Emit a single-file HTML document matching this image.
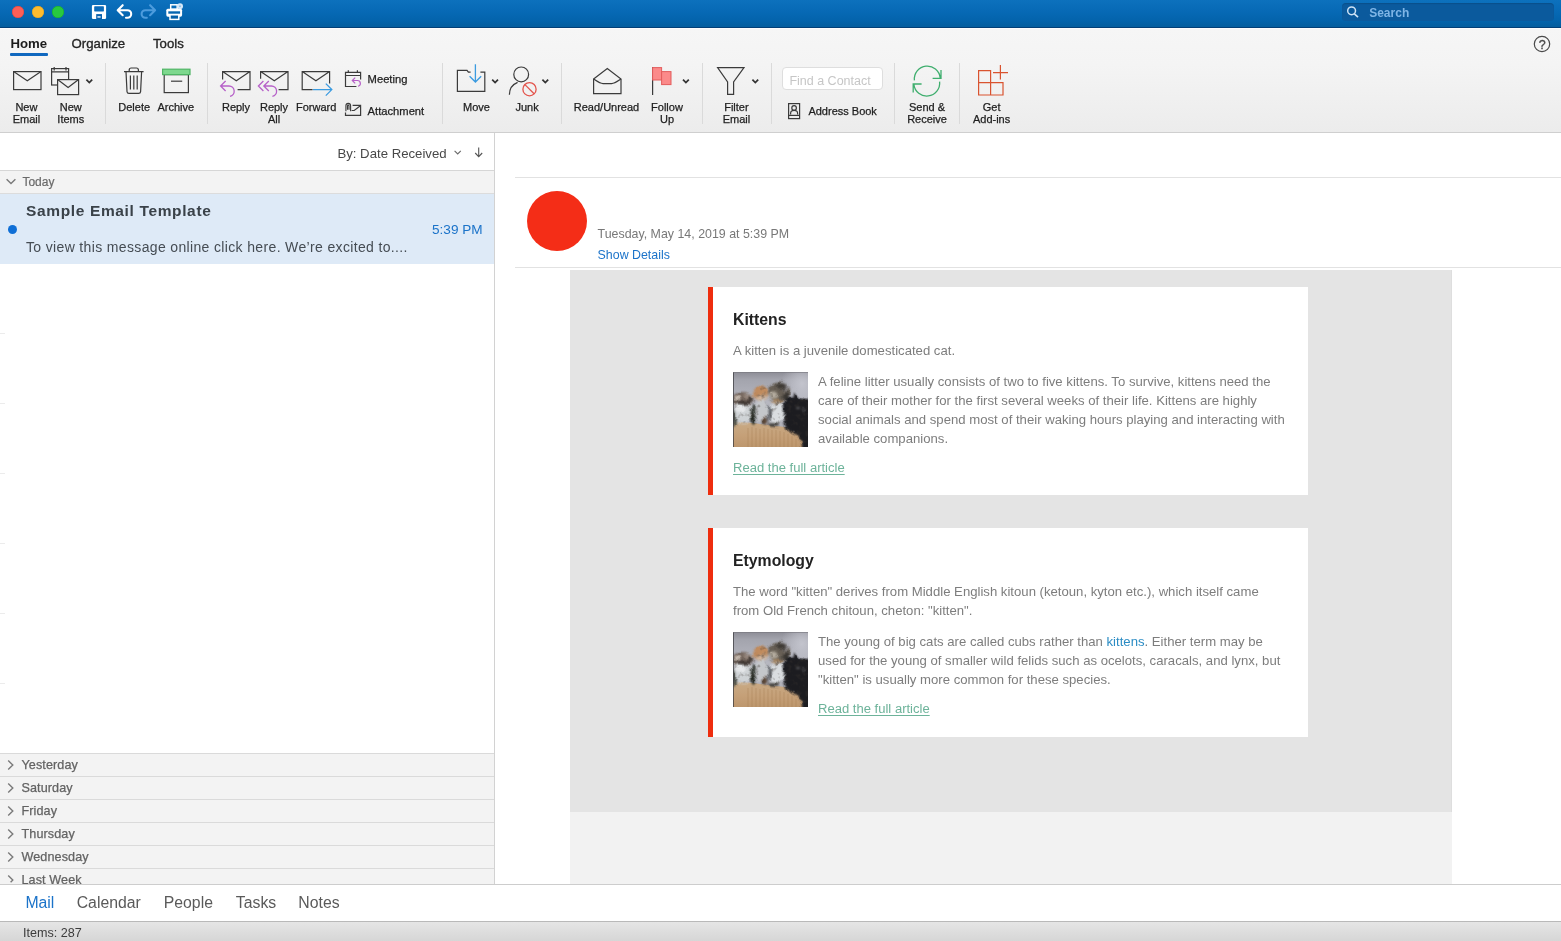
<!DOCTYPE html>
<html lang="en"><head><meta charset="utf-8"><title>Outlook</title>
<style>
html,body{margin:0;padding:0;background:#fff;}
body{width:1561px;height:941px;overflow:hidden;position:relative;font-family:"Liberation Sans", sans-serif;}
.t{position:absolute;white-space:nowrap;line-height:1;}
.r{position:absolute;box-sizing:border-box;}
svg{position:absolute;left:0;top:0;overflow:visible;}
#app{position:absolute;left:0;top:0;width:1561px;height:941px;will-change:transform;}
</style></head><body>
<div id="app">
<!-- title bar -->
<div class="r" style="left:0px;top:0px;width:1561px;height:28px;background:linear-gradient(#0d71bd,#0769b5 42%,#0363ab 75%,#045e9f 94%,#045e9f 96%);"></div>
<div class="r" style="left:0px;top:27px;width:1561px;height:1px;background:#023f77;"></div>
<div class="r" style="left:12px;top:6px;width:12px;height:12px;background:#fc5f57;border-radius:50%;box-shadow:inset 0 0 0 0.5px #e0443e;"></div>
<div class="r" style="left:32px;top:6px;width:12px;height:12px;background:#fdbc2e;border-radius:50%;box-shadow:inset 0 0 0 0.5px #dea123;"></div>
<div class="r" style="left:52px;top:6px;width:12px;height:12px;background:#28c840;border-radius:50%;box-shadow:inset 0 0 0 0.5px #1aab29;"></div>
<div class="r" style="left:1342px;top:3px;width:212px;height:18px;background:#0b5a9d;border-radius:4px;box-shadow:inset 0 1px 1px rgba(0,0,0,.12);"></div>
<div class="t" style="left:1369.20px;top:7.00px;font-size:12px;color:#7fb5e6;font-weight:bold;">Search</div>
<!-- ribbon -->
<div class="r" style="left:0px;top:28px;width:1561px;height:104px;background:linear-gradient(#f6f6f6,#f4f4f4 35%,#ececec);"></div>
<div class="r" style="left:0px;top:28px;width:1561px;height:1px;background:#fcfcfc;"></div>
<div class="r" style="left:0px;top:132px;width:1561px;height:1px;background:#cfcfcf;"></div>
<div class="t" style="left:10.40px;top:36.50px;font-size:13.2px;color:#1b1b1b;font-weight:bold;letter-spacing:0.05px;">Home</div>
<div class="r" style="left:10px;top:53px;width:38px;height:3px;background:#1068bf;border-radius:1px;"></div>
<div class="t" style="left:71.60px;top:36.50px;font-size:13.2px;color:#262626;-webkit-text-stroke:0.35px #262626;">Organize</div>
<div class="t" style="left:153.00px;top:36.50px;font-size:13.2px;color:#262626;-webkit-text-stroke:0.35px #262626;">Tools</div>
<div class="t" style="left:1392.20px;width:300px;text-align:center;top:38.95px;font-size:12.5px;color:#484848;-webkit-text-stroke:0.3px #484848;">?</div>
<div class="r" style="left:105px;top:63px;width:1px;height:61px;background:#dadada;"></div>
<div class="r" style="left:207px;top:63px;width:1px;height:61px;background:#dadada;"></div>
<div class="r" style="left:442px;top:63px;width:1px;height:61px;background:#dadada;"></div>
<div class="r" style="left:561px;top:63px;width:1px;height:61px;background:#dadada;"></div>
<div class="r" style="left:702px;top:63px;width:1px;height:61px;background:#dadada;"></div>
<div class="r" style="left:771px;top:63px;width:1px;height:61px;background:#dadada;"></div>
<div class="r" style="left:894px;top:63px;width:1px;height:61px;background:#dadada;"></div>
<div class="r" style="left:959px;top:63px;width:1px;height:61px;background:#dadada;"></div>
<div class="t" style="left:-123.60px;width:300px;text-align:center;top:101.70px;font-size:11px;color:#1e1e1e;-webkit-text-stroke:0.25px #1e1e1e;">New</div>
<div class="t" style="left:-123.60px;width:300px;text-align:center;top:113.70px;font-size:11px;color:#1e1e1e;-webkit-text-stroke:0.25px #1e1e1e;">Email</div>
<div class="t" style="left:-79.20px;width:300px;text-align:center;top:101.70px;font-size:11px;color:#1e1e1e;-webkit-text-stroke:0.25px #1e1e1e;">New</div>
<div class="t" style="left:-79.20px;width:300px;text-align:center;top:113.70px;font-size:11px;color:#1e1e1e;-webkit-text-stroke:0.25px #1e1e1e;">Items</div>
<div class="t" style="left:-15.80px;width:300px;text-align:center;top:101.70px;font-size:11px;color:#1e1e1e;-webkit-text-stroke:0.25px #1e1e1e;">Delete</div>
<div class="t" style="left:25.80px;width:300px;text-align:center;top:101.70px;font-size:11px;color:#1e1e1e;-webkit-text-stroke:0.25px #1e1e1e;">Archive</div>
<div class="t" style="left:86.00px;width:300px;text-align:center;top:101.70px;font-size:11px;color:#1e1e1e;-webkit-text-stroke:0.25px #1e1e1e;">Reply</div>
<div class="t" style="left:124.00px;width:300px;text-align:center;top:101.70px;font-size:11px;color:#1e1e1e;-webkit-text-stroke:0.25px #1e1e1e;">Reply</div>
<div class="t" style="left:124.00px;width:300px;text-align:center;top:113.70px;font-size:11px;color:#1e1e1e;-webkit-text-stroke:0.25px #1e1e1e;">All</div>
<div class="t" style="left:166.20px;width:300px;text-align:center;top:101.70px;font-size:11px;color:#1e1e1e;-webkit-text-stroke:0.25px #1e1e1e;">Forward</div>
<div class="t" style="left:367.60px;top:73.80px;font-size:11.2px;color:#1e1e1e;-webkit-text-stroke:0.25px #1e1e1e;">Meeting</div>
<div class="t" style="left:367.60px;top:105.60px;font-size:11.2px;color:#1e1e1e;-webkit-text-stroke:0.25px #1e1e1e;">Attachment</div>
<div class="t" style="left:326.50px;width:300px;text-align:center;top:101.70px;font-size:11px;color:#1e1e1e;-webkit-text-stroke:0.25px #1e1e1e;">Move</div>
<div class="t" style="left:377.10px;width:300px;text-align:center;top:101.70px;font-size:11px;color:#1e1e1e;-webkit-text-stroke:0.25px #1e1e1e;">Junk</div>
<div class="t" style="left:456.50px;width:300px;text-align:center;top:101.70px;font-size:11px;color:#1e1e1e;-webkit-text-stroke:0.25px #1e1e1e;">Read/Unread</div>
<div class="t" style="left:517.00px;width:300px;text-align:center;top:101.70px;font-size:11px;color:#1e1e1e;-webkit-text-stroke:0.25px #1e1e1e;">Follow</div>
<div class="t" style="left:517.00px;width:300px;text-align:center;top:113.70px;font-size:11px;color:#1e1e1e;-webkit-text-stroke:0.25px #1e1e1e;">Up</div>
<div class="t" style="left:586.40px;width:300px;text-align:center;top:101.70px;font-size:11px;color:#1e1e1e;-webkit-text-stroke:0.25px #1e1e1e;">Filter</div>
<div class="t" style="left:586.40px;width:300px;text-align:center;top:113.70px;font-size:11px;color:#1e1e1e;-webkit-text-stroke:0.25px #1e1e1e;">Email</div>
<div class="r" style="left:782px;top:67px;width:99px;height:21px;background:#fff;border:1px solid #dedede;border-radius:4px;box-sizing:content-box;"></div>
<div class="t" style="left:789.40px;top:74.75px;font-size:12.5px;color:#c6c6c6;">Find a Contact</div>
<div class="t" style="left:808.40px;top:105.70px;font-size:11px;color:#1e1e1e;-webkit-text-stroke:0.25px #1e1e1e;">Address Book</div>
<div class="t" style="left:777.00px;width:300px;text-align:center;top:101.70px;font-size:11px;color:#1e1e1e;-webkit-text-stroke:0.25px #1e1e1e;">Send &amp;</div>
<div class="t" style="left:777.00px;width:300px;text-align:center;top:113.70px;font-size:11px;color:#1e1e1e;-webkit-text-stroke:0.25px #1e1e1e;">Receive</div>
<div class="t" style="left:841.60px;width:300px;text-align:center;top:101.70px;font-size:11px;color:#1e1e1e;-webkit-text-stroke:0.25px #1e1e1e;">Get</div>
<div class="t" style="left:841.60px;width:300px;text-align:center;top:113.70px;font-size:11px;color:#1e1e1e;-webkit-text-stroke:0.25px #1e1e1e;">Add-ins</div>
<!-- message list -->
<div class="r" style="left:0px;top:133px;width:494px;height:751px;background:#fff;"></div>
<div class="r" style="left:494px;top:133px;width:1px;height:751px;background:#d2d2d2;"></div>
<div class="t" style="left:337.40px;top:146.50px;font-size:13.2px;color:#484848;">By: Date Received</div>
<div class="r" style="left:0px;top:170px;width:494px;height:1px;background:#d6d6d6;"></div>
<div class="r" style="left:0px;top:171px;width:494px;height:22px;background:#f3f3f3;"></div>
<div class="r" style="left:0px;top:193px;width:494px;height:1px;background:#dcdcdc;"></div>
<div class="t" style="left:22.40px;top:176.00px;font-size:12px;color:#6a6a6a;-webkit-text-stroke:0.2px #6a6a6a;">Today</div>
<div class="r" style="left:0px;top:194px;width:494px;height:70px;background:#deeaf7;"></div>
<div class="t" style="left:26.00px;top:202.75px;font-size:15.5px;color:#3a4249;font-weight:bold;letter-spacing:0.64px;">Sample Email Template</div>
<div class="r" style="left:8px;top:225px;width:9px;height:9px;background:#0f6fd6;border-radius:50%;"></div>
<div class="t" style="left:26.00px;top:240.00px;font-size:14px;color:#454c53;letter-spacing:0.35px;">To view this message online click here. We’re excited to....</div>
<div class="t" style="left:432.00px;top:222.70px;font-size:13.6px;color:#1b73c9;">5:39 PM</div>
<div class="r" style="left:0px;top:333px;width:5px;height:1px;background:#ececec;"></div>
<div class="r" style="left:0px;top:403px;width:5px;height:1px;background:#ececec;"></div>
<div class="r" style="left:0px;top:473px;width:5px;height:1px;background:#ececec;"></div>
<div class="r" style="left:0px;top:543px;width:5px;height:1px;background:#ececec;"></div>
<div class="r" style="left:0px;top:613px;width:5px;height:1px;background:#ececec;"></div>
<div class="r" style="left:0px;top:683px;width:5px;height:1px;background:#ececec;"></div>
<div class="r" style="left:0px;top:753px;width:494px;height:1px;background:#dadada;"></div>
<div class="r" style="left:0px;top:754px;width:494px;height:22px;background:#f3f3f3;"></div>
<div class="t" style="left:21.50px;top:758.70px;font-size:12.6px;color:#636363;letter-spacing:0.1px;-webkit-text-stroke:0.25px #636363;">Yesterday</div>
<div class="r" style="left:0px;top:776px;width:494px;height:1px;background:#dadada;"></div>
<div class="r" style="left:0px;top:777px;width:494px;height:22px;background:#f3f3f3;"></div>
<div class="t" style="left:21.50px;top:781.70px;font-size:12.6px;color:#636363;letter-spacing:0.1px;-webkit-text-stroke:0.25px #636363;">Saturday</div>
<div class="r" style="left:0px;top:799px;width:494px;height:1px;background:#dadada;"></div>
<div class="r" style="left:0px;top:800px;width:494px;height:22px;background:#f3f3f3;"></div>
<div class="t" style="left:21.50px;top:804.70px;font-size:12.6px;color:#636363;letter-spacing:0.1px;-webkit-text-stroke:0.25px #636363;">Friday</div>
<div class="r" style="left:0px;top:822px;width:494px;height:1px;background:#dadada;"></div>
<div class="r" style="left:0px;top:823px;width:494px;height:22px;background:#f3f3f3;"></div>
<div class="t" style="left:21.50px;top:827.70px;font-size:12.6px;color:#636363;letter-spacing:0.1px;-webkit-text-stroke:0.25px #636363;">Thursday</div>
<div class="r" style="left:0px;top:845px;width:494px;height:1px;background:#dadada;"></div>
<div class="r" style="left:0px;top:846px;width:494px;height:22px;background:#f3f3f3;"></div>
<div class="t" style="left:21.50px;top:850.70px;font-size:12.6px;color:#636363;letter-spacing:0.1px;-webkit-text-stroke:0.25px #636363;">Wednesday</div>
<div class="r" style="left:0px;top:868px;width:494px;height:1px;background:#dadada;"></div>
<div class="r" style="left:0px;top:869px;width:494px;height:22px;background:#f3f3f3;"></div>
<div class="t" style="left:21.50px;top:873.70px;font-size:12.6px;color:#636363;letter-spacing:0.1px;-webkit-text-stroke:0.25px #636363;">Last Week</div>
<!-- reading pane -->
<div class="r" style="left:495px;top:133px;width:1066px;height:751px;background:#fff;"></div>
<div class="r" style="left:515px;top:177px;width:1046px;height:1px;background:#e2e2e2;"></div>
<div class="r" style="left:515px;top:267px;width:1046px;height:1px;background:#e2e2e2;"></div>
<div class="r" style="left:527px;top:191px;width:60px;height:60px;background:#f42d17;border-radius:50%;"></div>
<div class="t" style="left:597.60px;top:227.80px;font-size:12.4px;color:#787878;">Tuesday, May 14, 2019 at 5:39 PM</div>
<div class="t" style="left:597.60px;top:248.80px;font-size:12.4px;color:#1b73c9;">Show Details</div>
<div class="r" style="left:570px;top:270px;width:882px;height:542px;background:#e4e4e4;"></div>
<div class="r" style="left:570px;top:812px;width:882px;height:72px;background:#f2f2f2;"></div>
<div class="r" style="left:1451px;top:270px;width:1px;height:542px;background:#dedede;"></div>
<div class="r" style="left:708px;top:287px;width:600px;height:208px;background:#fff;"></div>
<div class="r" style="left:708px;top:287px;width:5px;height:208px;background:#ee2d0e;"></div>
<div class="r" style="left:708px;top:528px;width:600px;height:209px;background:#fff;"></div>
<div class="r" style="left:708px;top:528px;width:5px;height:209px;background:#ee2d0e;"></div>
<div class="t" style="left:733.00px;top:311.60px;font-size:15.8px;color:#222;font-weight:bold;">Kittens</div>
<div class="t" style="left:733.00px;top:343.93px;font-size:13.15px;color:#7d7d7d;">A kitten is a juvenile domesticated cat.</div>
<div class="t" style="left:818.00px;top:374.93px;font-size:13.15px;color:#7d7d7d;">A feline litter usually consists of two to five kittens. To survive, kittens need the</div>
<div class="t" style="left:818.00px;top:393.93px;font-size:13.15px;color:#7d7d7d;">care of their mother for the first several weeks of their life. Kittens are highly</div>
<div class="t" style="left:818.00px;top:412.93px;font-size:13.15px;color:#7d7d7d;">social animals and spend most of their waking hours playing and interacting with</div>
<div class="t" style="left:818.00px;top:431.93px;font-size:13.15px;color:#7d7d7d;">available companions.</div>
<div class="t" style="left:733.00px;top:460.98px;font-size:13.05px;color:#6db39a;text-decoration:underline;text-underline-offset:1.5px;text-decoration-thickness:1px;">Read the full article</div>
<div class="t" style="left:733.00px;top:552.60px;font-size:15.8px;color:#222;font-weight:bold;">Etymology</div>
<div class="t" style="left:733.00px;top:584.92px;font-size:13.15px;color:#7d7d7d;">The word "kitten" derives from Middle English kitoun (ketoun, kyton etc.), which itself came</div>
<div class="t" style="left:733.00px;top:603.92px;font-size:13.15px;color:#7d7d7d;">from Old French chitoun, cheton: "kitten".</div>
<div class="t" style="left:818.00px;top:634.92px;font-size:13.15px;color:#7d7d7d;">The young of big cats are called cubs rather than <span style="color:#2b8cc4">kittens</span>. Either term may be</div>
<div class="t" style="left:818.00px;top:653.92px;font-size:13.15px;color:#7d7d7d;">used for the young of smaller wild felids such as ocelots, caracals, and lynx, but</div>
<div class="t" style="left:818.00px;top:672.92px;font-size:13.15px;color:#7d7d7d;">"kitten" is usually more common for these species.</div>
<div class="t" style="left:818.00px;top:701.98px;font-size:13.05px;color:#6db39a;text-decoration:underline;text-underline-offset:1.5px;text-decoration-thickness:1px;">Read the full article</div>
<svg width="0" height="0" style="position:absolute">
<defs>
 <linearGradient id="kbg" x1="0" y1="0" x2="0" y2="1"><stop offset="0" stop-color="#8d8d96"/><stop offset=".1" stop-color="#a3a4ad"/><stop offset=".4" stop-color="#b6b7c0"/><stop offset="1" stop-color="#adadb5"/></linearGradient>
 <radialGradient id="klt" cx=".8" cy=".35" r=".7"><stop offset="0" stop-color="#c3c4cd"/><stop offset="1" stop-color="#c3c4cd" stop-opacity="0"/></radialGradient>
 <linearGradient id="kbk" x1="0" y1="0" x2="0" y2="1"><stop offset="0" stop-color="#c9ab86"/><stop offset=".5" stop-color="#c5a078"/><stop offset="1" stop-color="#bb946a"/></linearGradient>
 <filter id="kfur" x="0" y="0" width="100%" height="100%" color-interpolation-filters="sRGB">
  <feGaussianBlur in="SourceGraphic" stdDeviation="1.0" result="b"/>
  <feTurbulence type="fractalNoise" baseFrequency="0.11" numOctaves="2" seed="7" result="n"/>
  <feDisplacementMap in="b" in2="n" scale="6" xChannelSelector="R" yChannelSelector="G" result="d"/>
  <feTurbulence type="fractalNoise" baseFrequency="0.22" numOctaves="2" seed="3" result="n2"/>
  <feColorMatrix in="n2" type="matrix" values="0 0 0 0 0  0 0 0 0 0  0 0 0 0 0  1.2 0 0 0 -0.64" result="na"/>
  <feFlood flood-color="#3a342e" result="dk"/>
  <feComposite in="dk" in2="na" operator="in" result="spk"/>
  <feComposite in="spk" in2="d" operator="atop" result="m"/>
  <feGaussianBlur in="m" stdDeviation="0.65"/>
 </filter>
 <filter id="kbl2" x="-10%" y="-10%" width="120%" height="120%"><feGaussianBlur stdDeviation="0.6"/></filter>
 <clipPath id="kcl"><rect x="0" y="0" width="75" height="75"/></clipPath>
 <g id="kit" clip-path="url(#kcl)">
  <rect width="75" height="75" fill="url(#kbg)"/>
  <rect x="45" y="0" width="30" height="34" fill="url(#klt)"/>
  <!-- basket (not displaced) -->
  <g filter="url(#kbl2)">
   <path d="M-3 49 L20 51 L52 55 L70 64 L70 78 L-3 78 Z" fill="url(#kbk)"/>
   <g stroke="#a07a4e" stroke-width=".7" opacity=".5">
    <path d="M15 56V75M19 55V75M23 56V75M27 57V75M31 56V75M35 57V75M39 58V75M43 58V75M47 59V75M51 60V75M55 62V75M59 64V75M63 67V75"/>
   </g>
  </g>
  <g filter="url(#kfur)">
   <rect x="-5" y="-5" width="85" height="85" fill="#000" opacity="0"/>
   <!-- kitten 1 -->
   <ellipse cx="9" cy="27.5" rx="11.5" ry="7.5" fill="#75665d"/>
   <ellipse cx="4" cy="26.5" rx="3.2" ry="3" fill="#c4b8ad"/>
   <ellipse cx="14" cy="23.5" rx="4.5" ry="2.4" fill="#95857b"/>
   <ellipse cx="10" cy="41.5" rx="10" ry="10.5" fill="#cfd3d6"/>
   <ellipse cx="8" cy="36" rx="5" ry="3" fill="#e6e8ea"/>
   <ellipse cx="20.5" cy="43" rx="2.8" ry="10" fill="#1f251d"/>
   <ellipse cx="1" cy="45" rx="2" ry="9" fill="#43463f"/>
   <!-- kitten 2 orange -->
   <ellipse cx="27.5" cy="21.5" rx="7.5" ry="7.2" fill="#c08b5e"/>
   <ellipse cx="28" cy="25.5" rx="5" ry="3.2" fill="#d3b59b"/>
   <ellipse cx="28.5" cy="38.5" rx="7.5" ry="10.5" fill="#c4c7cb"/>
   <ellipse cx="32" cy="49.5" rx="3" ry="4.2" fill="#5a4636"/>
   <!-- kitten 3 tabby -->
   <ellipse cx="46" cy="20" rx="11" ry="9.5" fill="#675f55"/>
   <ellipse cx="41" cy="23" rx="4.6" ry="3.6" fill="#b3ab9e"/>
   <ellipse cx="52.5" cy="15" rx="3.4" ry="3.2" fill="#8a8789"/>
   <ellipse cx="45" cy="29" rx="5.5" ry="1.8" fill="#b08a5f"/>
   <ellipse cx="44" cy="40.5" rx="8.6" ry="10.8" fill="#dadde0"/>
   <ellipse cx="36.2" cy="41" rx="1.4" ry="8.5" fill="#474b52"/>
   <ellipse cx="41" cy="52" rx="5" ry="2" fill="#45433f"/>
   <ellipse cx="11" cy="30.5" rx="7" ry="2.2" fill="#3f3632"/>
   <ellipse cx="17" cy="27" rx="2.5" ry="3.5" fill="#4a403b"/>
   <ellipse cx="48" cy="14" rx="5" ry="2.6" fill="#3e3a35"/>
   <ellipse cx="53" cy="24" rx="3" ry="5" fill="#3a3733"/>
   <ellipse cx="44" cy="31.5" rx="1.6" ry="1.4" fill="#4b4038"/>
   <ellipse cx="25" cy="23.5" rx="1.1" ry="1" fill="#5a3f2a"/>
   <ellipse cx="30.5" cy="23.5" rx="1.1" ry="1" fill="#5a3f2a"/>
   <ellipse cx="54.5" cy="42" rx="3.5" ry="10" fill="#26262a"/>
   <!-- kitten 4 black -->
   <path d="M50.5 33 C52.5 25.5 56.5 24 60 26 L62 19.5 L66.5 26 L75 27 L80 27 L80 80 L68.5 80 L67 64 L58 60.5 C52.5 57.5 49.5 50 51.5 42 Z" fill="#1c1c20"/>
   <ellipse cx="65" cy="36" rx="2.1" ry="1.1" fill="#606062"/>
   <ellipse cx="70.5" cy="37.5" rx="1.7" ry="1" fill="#58595d"/>
  </g>
  <rect x="0" y="0" width="1" height="75" fill="#3c3c40" opacity=".75"/>
  <rect x="0" y="0" width="75" height="1" fill="#77777d" opacity=".6"/>
 </g>
</defs></svg>
<svg width="75" height="75" viewBox="0 0 75 75" style="left:733px;top:372px"><use href="#kit"/></svg>
<svg width="75" height="75" viewBox="0 0 75 75" style="left:733px;top:632px"><use href="#kit"/></svg>

<!-- nav + status -->
<div class="r" style="left:0px;top:884px;width:1561px;height:37px;background:#fff;"></div>
<div class="r" style="left:0px;top:884px;width:1561px;height:1px;background:#cdcdcd;"></div>
<div class="t" style="left:25.40px;top:894.60px;font-size:15.8px;color:#1b73c9;">Mail</div>
<div class="t" style="left:76.70px;top:894.60px;font-size:15.8px;color:#5a5a5a;">Calendar</div>
<div class="t" style="left:163.75px;top:894.60px;font-size:15.8px;color:#5a5a5a;">People</div>
<div class="t" style="left:235.80px;top:894.60px;font-size:15.8px;color:#5a5a5a;">Tasks</div>
<div class="t" style="left:298.30px;top:894.60px;font-size:15.8px;color:#5a5a5a;">Notes</div>
<div class="r" style="left:0px;top:921px;width:1561px;height:20px;background:linear-gradient(#e6e6e6,#d6d6d6);"></div>
<div class="r" style="left:0px;top:921px;width:1561px;height:1px;background:#b9b9b9;"></div>
<div class="t" style="left:22.90px;top:926.70px;font-size:12.6px;color:#3c3c3c;">Items: 287</div>
<svg width="1561" height="941" viewBox="0 0 1561 941" fill="none" stroke-linecap="butt" stroke-linejoin="miter">
<!-- title bar icons -->
<g>
 <!-- save -->
 <rect x="91.9" y="4.9" width="14.2" height="14.1" rx="1.2" fill="#fff"/>
 <rect x="94.2" y="6.3" width="9.7" height="5.1" rx=".6" fill="#0c6bb9"/>
 <rect x="96.2" y="14.1" width="5.8" height="4.9" fill="#0a62ad"/>
 <rect x="97.4" y="16.2" width="3.2" height="1.5" fill="#e8f2fb"/>
 <!-- undo -->
 <path d="M122.7 5.2 L117.7 10.2 L122.7 15.2 M118 10.2 H127.4 A3.8 3.8 0 0 1 127.4 17.8 H126" stroke="#fff" stroke-width="2.1" stroke-linecap="round" stroke-linejoin="round"/>
 <!-- redo (dim) -->
 <path d="M150.1 5.2 L155.1 10.2 L150.1 15.2 M154.8 10.2 H145.4 A3.8 3.8 0 0 0 145.4 17.8 H146.8" stroke="#4d9cdd" stroke-width="2.1" stroke-linecap="round" stroke-linejoin="round"/>
 <!-- print -->
 <rect x="170.7" y="4.8" width="6.5" height="4.4" stroke="#fff" stroke-width="1.5"/>
 <rect x="166.3" y="8.7" width="15.8" height="8" rx="1.6" fill="#fff"/>
 <rect x="168.3" y="11.3" width="11.8" height="2.4" fill="#0666b0"/>
 <rect x="170" y="14.8" width="8.8" height="4.6" fill="#0660a8" stroke="#fff" stroke-width="1.5"/>
 <circle cx="180" cy="6.2" r="3" fill="#d6e8f8"/>
 <circle cx="180" cy="6.2" r="1" fill="#8dbde6"/>
 <!-- search magnifier -->
 <circle cx="1351.6" cy="10.8" r="3.9" stroke="#cfe3f6" stroke-width="1.5"/>
 <path d="M1354.4 13.8 L1358 17.2" stroke="#cfe3f6" stroke-width="1.6"/>
</g>
<!-- help -->
<circle cx="1542" cy="44" r="7.7" stroke="#4a4a4a" stroke-width="1.2"/>

<g stroke="#3b3b3b" stroke-width="1.2">
 <!-- New Email -->
 <rect x="13.6" y="71.6" width="27.4" height="18"/>
 <path d="M13.6 71.6 L27.3 80.8 L41 71.6"/>
 <!-- New Items -->
 <rect x="51.6" y="68.6" width="17" height="16.4"/>
 <path d="M51.6 71.8 H68.6 M54.2 67 V70.4 M66 67 V70.4" />
 <rect x="57.6" y="79.6" width="21" height="15" fill="#f1f1f1"/>
 <path d="M57.6 79.6 L68.1 87.4 L78.6 79.6"/>
 <!-- Delete -->
 <path d="M124 71.6 H143.6 M129.2 71.6 V70 a2 2 0 0 1 2 -2 H136.4 a2 2 0 0 1 2 2 V71.6"/>
 <path d="M126 71.6 L127 91.6 a2 2 0 0 0 2 1.8 H138.6 a2 2 0 0 0 2 -1.8 L141.6 71.6"/>
 <path d="M130.4 75.4 V89.6 M133.8 75.4 V89.6 M137.2 75.4 V89.6"/>
 <!-- Archive -->
 <rect x="164.2" y="74.6" width="24.2" height="18"/>
 <path d="M171 81.2 H182.2"/>
 <rect x="162.6" y="69.2" width="27.4" height="5.4" fill="#7ed88e" stroke="#4fb565"/>
 <!-- Reply -->
 <path d="M222.6 79.6 V71.6 H250 V89.6 H237.6 M222.6 71.6 L236.3 80.8 L250 71.6"/>
 <!-- Reply All -->
 <path d="M260.6 78.8 V71.6 H288 V89.6 H278.6 M260.6 71.6 L274.3 80.8 L288 71.6"/>
 <!-- Forward -->
 <path d="M312.6 89.6 H302.2 V71.6 H329.6 V83.6 M302.2 71.6 L315.9 80.8 L329.6 71.6"/>
 <!-- Meeting -->
 <path d="M356.4 86.5 H345.5 V72.3 H360.6 V79.4 M345.5 75.5 H360.6 M348.3 70.2 V72.6 M357.4 70.2 V72.6"/>
 <!-- Attachment -->
 <path d="M352.6 105.4 H360.6 V115.3 H345.5 V112.4 M360.4 105.8 L354.2 110.5 H351.6"/>
 <path d="M345.9 111.3 V105.7 a2.35 2.35 0 0 1 4.7 0 V111.3 M347.5 109.8 V105.9 a0.75 0.75 0 0 1 1.5 0 V109.8" stroke-width="1.1"/>
 <!-- Move folder -->
 <path d="M470.6 72.2 H468.4 L467 70.4 H457.4 V91.4 H484.8 V72.2 H480.4"/>
 <!-- Junk person -->
 <circle cx="521.2" cy="74.4" r="7.4"/>
 <path d="M509.4 94.8 C509.4 88.6 512.6 84.4 517.6 82.4"/>
 <!-- Read/Unread -->
 <path d="M593.6 79 L607.3 68.6 L621 79 V93.6 H593.6 Z"/>
 <path d="M593.6 79 C598 82 600 83.6 603 83.6 H611.6 C614.6 83.6 616.6 82 621 79"/>
 <!-- Follow up pole -->
 <path d="M652.6 67 V95"/>
 <!-- Filter -->
 <path d="M717.6 67.6 H744 L733.6 82 V94.4 H727.6 V82 Z"/>
 <!-- Address book -->
 <rect x="788.6" y="103.6" width="11" height="15"/>
 <path d="M788.6 115.4 H799.6"/>
 <circle cx="794.1" cy="108" r="2.3"/>
 <path d="M790.6 114.6 V113.4 a3.5 3 0 0 1 7 0 V114.6"/>
</g>
<!-- chevrons -->
<g stroke="#333" stroke-width="1.7">
 <path d="M86.4 79.6 L89.3 82.6 L92.2 79.6"/>
 <path d="M492.2 79.6 L495.1 82.6 L498 79.6"/>
 <path d="M542.4 79.6 L545.3 82.6 L548.2 79.6"/>
 <path d="M683 79.6 L685.9 82.6 L688.8 79.6"/>
 <path d="M752.4 79.6 L755.3 82.6 L758.2 79.6"/>
</g>
<!-- purple reply arrows -->
<g stroke="#b660c8" stroke-width="1.3">
 <path d="M225.6 81 L220.6 86 L225.6 91 M221 86 H229 a5.2 5.2 0 0 1 1 10.3"/>
 <path d="M263.4 81 L258.4 86 L263.4 91 M268.8 81 L263.8 86 L268.8 91 M264.2 86 H271.4 a5.2 5.2 0 0 1 1 10.3"/>
 <path d="M355.2 77.6 L352.3 80.5 L355.2 83.4 M352.7 80.5 H357.4 a2.9 2.9 0 0 1 .6 5.75" stroke-width="1.2"/>
</g>
<!-- blue arrows -->
<g stroke="#3b9be0" stroke-width="1.3">
 <path d="M313 89.6 H331.4 M325.8 83.6 L331.8 89.6 L325.8 95.6"/>
 <path d="M475.4 64.2 V82 M469.6 76.2 L475.4 82 L481.2 76.2"/>
</g>
<!-- junk no-sign -->
<circle cx="529.5" cy="89.2" r="6.6" fill="#f1f1f1" stroke="#e3544c" stroke-width="1.3"/>
<path d="M524.9 84.6 L534.1 93.8" stroke="#e3544c" stroke-width="1.3"/>
<!-- flags -->
<rect x="652.6" y="67.6" width="9" height="12.4" fill="#fb8a8a" stroke="#e35d5d" stroke-width="1"/>
<rect x="661.6" y="71.6" width="9.4" height="13" fill="#fb8a8a" stroke="#e35d5d" stroke-width="1"/>
<!-- send/receive -->
<g stroke="#3fae6e" stroke-width="1.3">
 <path d="M914.4 80.4 A12.6 12.6 0 0 1 940.2 77.6 M941 70 V78.4 H932.6"/>
 <path d="M939.6 81.6 A12.6 12.6 0 0 1 913.9 84.6 M913.2 92.4 V84 H921.6"/>
</g>
<!-- add-ins -->
<g stroke="#d9532f" stroke-width="1.2">
 <path d="M978.6 70.6 H990.6 V95 H978.6 Z M978.6 82.6 H1003 V95 H990.6"/>
 <path d="M993 72.6 H1008 M1000.4 65 V79.6"/>
</g>
<!-- list chevrons -->
<g stroke="#7a7a7a" stroke-width="1.4">
 <path d="M6.6 179.2 L11 183.6 L15.4 179.2"/>
 <path d="M454.6 150.8 L457.7 154 L460.8 150.8" stroke="#6a6a6a" stroke-width="1.1"/>
 <path d="M478.7 147.6 V156.4 M475.2 153 L478.7 156.6 L482.2 153" stroke="#555" stroke-width="1.1"/>
</g>
<g stroke="#7a7a7a" stroke-width="1.4" id="gch">
 <path d="M8.2 760.6 L12.8 765.1 L8.2 769.6"/>
 <path d="M8.2 783.6 L12.8 788.1 L8.2 792.6"/>
 <path d="M8.2 806.6 L12.8 811.1 L8.2 815.6"/>
 <path d="M8.2 829.6 L12.8 834.1 L8.2 838.6"/>
 <path d="M8.2 852.6 L12.8 857.1 L8.2 861.6"/>
 <path d="M8.2 875.6 L12.8 880.1 L10.6 882.3"/>
</g>
</svg>

</div>
</body></html>
